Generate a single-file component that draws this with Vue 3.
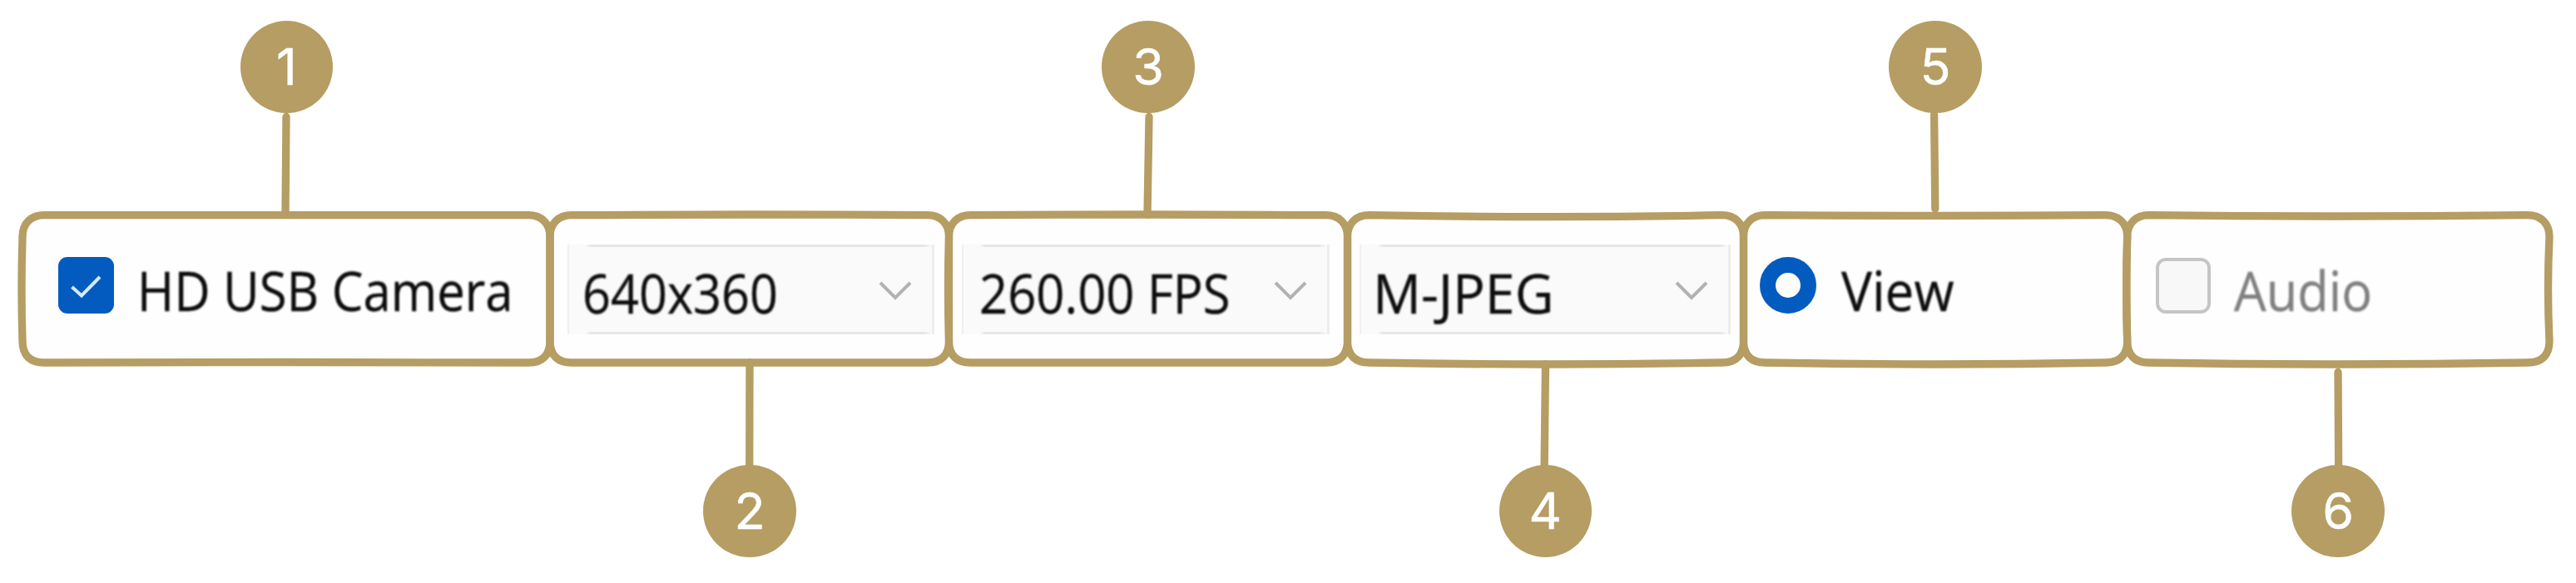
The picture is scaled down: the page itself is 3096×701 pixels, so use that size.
<script setup>
const cells = [
  { kind: 'check', label: 'HD USB Camera', length: 451.5, width: 634, pad: 43, gap: 28 },
  { kind: 'select', label: '640x360', length: 235, width: 479.5, pad: 21, box: 441, inset: 16 },
  { kind: 'select', label: '260.00 FPS', length: 301.5, width: 479, pad: 15.5, box: 441.5, inset: 19 },
  { kind: 'select', label: 'M-JPEG', length: 217.5, width: 475.7, pad: 14.5, box: 446, inset: 14 },
  { kind: 'radio', label: 'View', length: 135.5, width: 461.5, pad: 20, gap: 30 },
  { kind: 'empty', label: 'Audio', length: 166, width: 507, pad: 34, gap: 28.5 },
]

const frames = [
  { l: 27, r: 661, top: 0, bottom: -0.5, left: -1, right: 0 },
  { l: 661, r: 1140.5, top: -0.7, bottom: 0, left: 0, right: -1 },
  { l: 1140.5, r: 1619.5, top: -0.7, bottom: 0, left: 0, right: 0 },
  { l: 1619.5, r: 2095.5, top: 2, bottom: 2, left: 0, right: 0 },
  { l: 2095.5, r: 2556.7, top: 0.7, bottom: 2, left: 0, right: -1 },
  { l: 2556.7, r: 3064, top: 1.3, bottom: 2, left: -1, right: -1.5 },
]

const framePath = ({ l, r, top, bottom, left, right }) => {
  const t = 258.7
  const b = 436
  const cx = (l + r) / 2
  const cy = (t + b) / 2
  return `M${l + 26} ${t} Q${cx} ${t + top * 2} ${r - 26} ${t}` +
    ` C${r - 10} ${t} ${r} ${t + 10} ${r} ${t + 26}` +
    ` Q${r + right * 2} ${cy} ${r} ${b - 26}` +
    ` C${r} ${b - 10} ${r - 8} ${b} ${r - 26} ${b}` +
    ` Q${cx} ${b + bottom * 2} ${l + 26} ${b}` +
    ` C${l + 10} ${b} ${l} ${b - 8} ${l} ${b - 26}` +
    ` Q${l + left * 2} ${cy} ${l} ${t + 26}` +
    ` C${l} ${t + 10} ${l + 10} ${t} ${l + 26} ${t}Z`
}

const lines = [
  'M344 140.5L343 258',
  'M901 436L900.7 570',
  'M1381 140.5L1379 258',
  'M1857.5 438L1856 570',
  'M2324.6 138L2325.8 251',
  'M2810 447.5L2810.7 570',
]

const badges = [
  { n: 1, x: 344.3, y: 80.3 },
  { n: 2, x: 901, y: 614.7 },
  { n: 3, x: 1380, y: 80.3 },
  { n: 4, x: 1857.3, y: 614.7 },
  { n: 5, x: 2326, y: 80.3 },
  { n: 6, x: 2810.2, y: 614.7 },
]
</script>

<template>
  <main class="stage">
    <div class="strip">
      <div
        v-for="c in cells"
        :key="c.label"
        class="cell"
        :style="{ width: c.width + 'px', paddingLeft: c.pad + 'px', columnGap: (c.gap || 0) + 'px' }"
      >
        <div
          v-if="c.kind === 'select'"
          class="select"
          :style="{ width: c.box + 'px', paddingLeft: c.inset + 'px' }"
        >
          <svg class="label" :width="c.length" height="80">
            <text x="0" y="69.2" :textLength="c.length" lengthAdjust="spacingAndGlyphs">{{ c.label }}</text>
          </svg>
          <svg class="chevron" width="40" height="24" viewBox="0 0 40 24">
            <path d="M2 2L20 20L38 2" />
          </svg>
        </div>
        <template v-else>
          <span v-if="c.kind === 'check'" class="check">
            <svg width="67" height="68" viewBox="0 0 67 68">
              <path d="M16.5 36L28 46.5L50 24" />
            </svg>
          </span>
          <span v-else-if="c.kind === 'radio'" class="radio"></span>
          <span v-else class="empty"></span>
          <svg class="label" :class="{ muted: c.kind === 'empty' }" :width="c.length" height="80">
            <text x="0" y="65.8" :textLength="c.length" lengthAdjust="spacingAndGlyphs">{{ c.label }}</text>
          </svg>
        </template>
      </div>
    </div>

    <svg class="outline" width="3096" height="701" viewBox="0 0 3096 701">
      <path v-for="f in frames" :key="f.l" :d="framePath(f)" />
      <path v-for="d in lines" :key="d" :d="d" />
    </svg>

    <span
      v-for="b in badges"
      :key="b.n"
      class="badge"
      :style="{ left: b.x - 55.8 + 'px', top: b.y - 55.8 + 'px' }"
    >{{ b.n }}</span>
  </main>
</template>

<style>
body {
  margin: 0;
  background: #fff;
}
</style>

<style scoped>
.stage {
  position: relative;
  box-sizing: border-box;
  width: 3096px;
  height: 701px;
  padding: 259px 0 0 27px;
  overflow: hidden;
  background: #fff;
}
.strip {
  display: flex;
  height: 177px;
}
.cell {
  box-sizing: border-box;
  display: flex;
  flex: none;
  align-items: center;
  background: #fefefe;
}
.label {
  display: block;
  flex: none;
  overflow: visible;
  filter: blur(0.9px);
}
.label text {
  font-family: "Open Sans", "Noto Sans", sans-serif;
  font-size: 65.5px;
  fill: #0c0c0c;
  stroke: #0c0c0c;
  stroke-width: 0.4;
}
.label.muted text {
  fill: #808080;
  stroke: #808080;
}
.select {
  position: relative;
  box-sizing: border-box;
  display: flex;
  align-items: center;
  justify-content: space-between;
  height: 108px;
  padding-right: 24px;
  border-left: 2px solid #f0f0f0;
  border-right: 3px solid #ededee;
  background:
    linear-gradient(90deg, transparent 20px, #e6e6e6 26px, #e6e6e6 calc(100% - 10px), transparent) top / 100% 3px no-repeat,
    linear-gradient(90deg, transparent 20px, #e6e6e6 26px, #e6e6e6 calc(100% - 10px), transparent) bottom / 100% 3px no-repeat,
    #fafafb;
}
.chevron {
  display: block;
  margin-top: 4px;
  filter: blur(0.6px);
}
.chevron path {
  fill: none;
  stroke: #b2b2b2;
  stroke-width: 4;
}
.check {
  width: 67px;
  height: 68px;
  margin-bottom: 9px;
  border-radius: 11px;
  background: #045bbf;
  filter: blur(0.7px);
}
.check svg {
  display: block;
}
.check path {
  fill: none;
  stroke: #d0ecff;
  stroke-width: 4;
}
.radio {
  box-sizing: border-box;
  width: 68px;
  height: 68px;
  margin-bottom: 9px;
  border: 19px solid #045bbf;
  border-radius: 50%;
  filter: blur(0.7px);
}
.empty {
  box-sizing: border-box;
  width: 66px;
  height: 67px;
  margin-bottom: 9px;
  border: 4px solid #c5c5c5;
  border-radius: 12px;
  background: #f8f8f8;
  filter: blur(0.7px);
}
.outline {
  position: absolute;
  left: 0;
  top: 0;
}
.outline path {
  fill: none;
  stroke: #b59d63;
  stroke-width: 9.3;
  stroke-linecap: round;
}
.badge {
  position: absolute;
  width: 111.6px;
  height: 111.6px;
  border-radius: 50%;
  background: #b59d63;
  color: #fff;
  font: 400 61px/111.6px Inter, sans-serif;
  -webkit-text-stroke: 0.5px #fff;
  text-align: center;
}
</style>
